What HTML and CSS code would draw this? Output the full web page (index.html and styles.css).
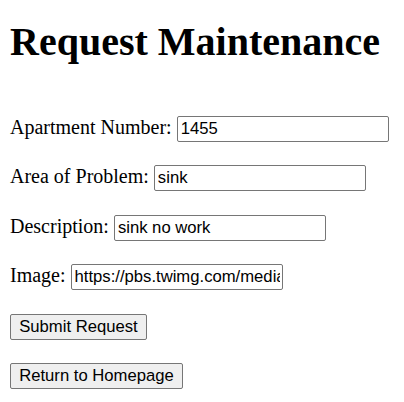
FILE: index.html
```html
<!DOCTYPE html>
<html>
<head>
<meta charset="utf-8">
<title>Request Maintenance</title>
<link rel="stylesheet" href="styles.css">
</head>
<body>
<h1 class="title">Request Maintenance</h1>
<form class="form">
  <div class="row"><label class="label">Apartment Number:</label><input class="field" type="text" value="1455"></div>
  <div class="row"><label class="label">Area of Problem:</label><input class="field" type="text" value="sink"></div>
  <div class="row"><label class="label">Description:</label><input class="field" type="text" value="sink no work"></div>
  <div class="row"><label class="label">Image:</label><input class="field" type="text" value="https://pbs.twimg.com/media/FxYz12AbCdE.jpg"></div>
  <div class="row"><button class="btn btn-submit" type="button">Submit Request</button></div>
  <div class="row"><button class="btn btn-home" type="button">Return to Homepage</button></div>
</form>
</body>
</html>
```

FILE: styles.css
```css
html, body {
  background: #ffffff;
}
body {
  margin: 0 10px;
  font-family: "Liberation Serif", "Times New Roman", serif;
  font-size: 20px;
  color: #000000;
}
.title {
  margin: 18.5px 0 0;
  font-size: 40px;
  line-height: 46px;
  font-weight: bold;
}
.form {
  margin-top: 51.5px;
  display: flex;
  flex-direction: column;
  gap: 23.4px;
}
.row {
  display: flex;
  align-items: baseline;
  gap: 5px;
  height: 26px;
}
.label {
  line-height: normal;
}
.field {
  box-sizing: border-box;
  width: 212px;
  height: 26px;
  margin: 0;
  padding: 0 2px 0 3px;
  border: 1px solid #767676;
  border-radius: 2px;
  font-family: "Liberation Sans", Arial, sans-serif;
  font-size: 16.67px;
  color: #000000;
  background: #ffffff;
}
.btn {
  box-sizing: border-box;
  height: 26px;
  margin: 0;
  padding: 0;
  border: 1px solid #767676;
  border-radius: 2px;
  background: #efefef;
  font-family: "Liberation Sans", Arial, sans-serif;
  font-size: 16.67px;
  color: #000000;
  text-align: center;
}
.btn-submit {
  width: 137px;
}
.btn-home {
  width: 173px;
}
```
